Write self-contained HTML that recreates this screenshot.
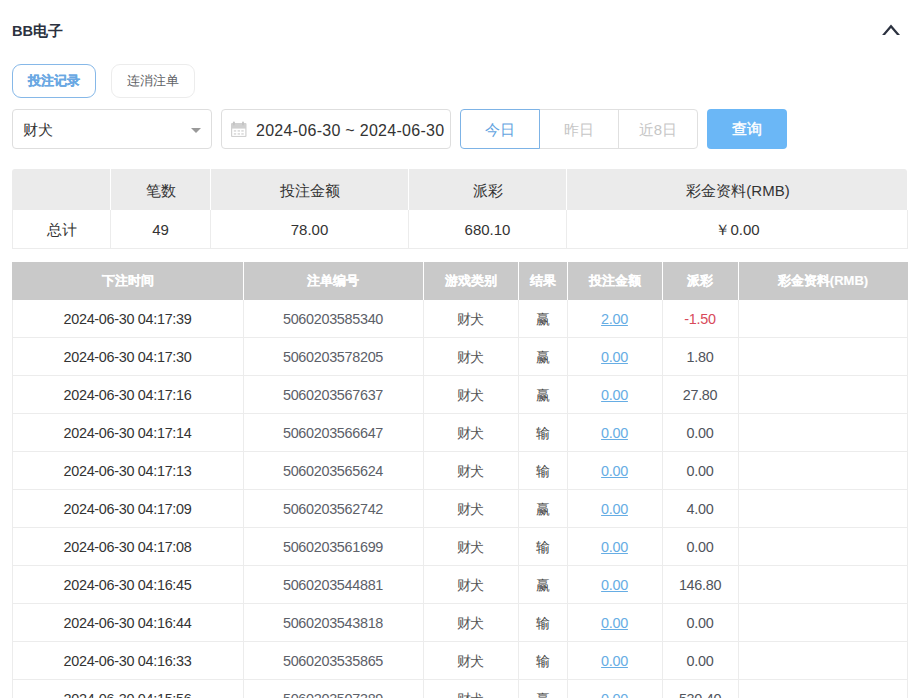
<!DOCTYPE html>
<html><head><meta charset="utf-8">
<style>
*{box-sizing:border-box;margin:0;padding:0}
html,body{width:914px;height:698px;overflow:hidden;background:#fff;font-family:"Liberation Sans",sans-serif;color:#333;position:relative}
.abs,.sh,.sd,.dh,.dr,.vw,.vg,.sc,.dc,.dhc{position:absolute}
#title{left:12px;top:22px;font-size:14.6px;font-weight:bold;color:#2c3240;line-height:18px}
#chev{left:881px;top:23px;width:20px;height:14px}
.tab{top:64px;height:34px;width:84px;border-radius:9px;border:1px solid #ececec;font-size:13px;line-height:32px;text-align:center;color:#606266}
#tab1{left:12px;border-color:#86b8e8;color:#6aa8e3;font-weight:bold;-webkit-text-stroke:0.25px #6aa8e3}
#tab2{left:111px}
.box{top:109px;height:40px;border:1px solid #dedede;border-radius:4px;font-size:15px;line-height:38px}
#sel{left:12px;width:200px;padding-left:10px;color:#333;line-height:40px}
#caret{left:191px;top:128px;width:0;height:0;border-left:5px solid transparent;border-right:5px solid transparent;border-top:5px solid #999}
#date{left:221px;width:230px;padding-left:34px;color:#333;letter-spacing:0.28px;font-size:16px;line-height:42px}
#cal{left:231px;top:121px;width:16px;height:16px}
#radio{left:460px;top:109px;width:238px;height:40px}
.rb{position:absolute;top:0;height:40px;border:1px solid #e0e0e0;font-size:15px;line-height:39px;text-align:center;color:#c6c6c6}
#rb1{left:0;width:80px;border-color:#7db3e6;color:#62a3e0;border-radius:4px 0 0 4px;z-index:2}
#rb2{left:79px;width:80px}
#rb3{left:158px;width:80px;border-radius:0 4px 4px 0}
#search{left:707px;top:109px;width:80px;height:40px;border-radius:4px;background:#6bb7f6;color:#fff;font-size:15px;line-height:40px;text-align:center;font-weight:normal;-webkit-text-stroke:0.45px #fff}
.sh{background:#ebebeb;border-radius:3px 3px 0 0}
.vw{width:1px;background:#fff}
.vg{width:1px;background:#ececec}
.sd{border:1px solid #ececec;border-top:none}
.sc{text-align:center;font-size:15px;line-height:40px;color:#333;padding-top:2px}
.sc.d{padding-top:1px;padding-left:1px}
.sc.h{padding-left:2px}
.dh{background:#c9c9c9}
.dhc{text-align:center;font-size:13px;line-height:40px;color:#fff;font-weight:bold;-webkit-text-stroke:0.15px #fff}
.dr{border-left:1px solid #ececec;border-right:1px solid #ececec;border-bottom:1px solid #ececec}
.dc{text-align:center;font-size:14.4px;line-height:39px;color:#444;letter-spacing:-0.3px}
.lk{color:#66ade4;text-decoration:underline}
.red{color:#d84a5a}
.c0{color:#333}.c1{color:#5c6068}.c2{color:#555}.c3{color:#444}.c5{color:#50545c}
</style></head><body>
<div id="title" class="abs">BB电子</div>
<svg id="chev" class="abs" viewBox="0 0 20 14"><path d="M10 1.6 L19 12 L16 12 L10 5.1 L4 12 L1.1 12 Z" fill="#2c3240"/></svg>
<div id="tab1" class="abs tab">投注记录</div>
<div id="tab2" class="abs tab">连消注单</div>
<div id="sel" class="abs box">财犬</div>
<div id="caret" class="abs"></div>
<div id="date" class="abs box">2024-06-30 ~ 2024-06-30</div>
<svg id="cal" class="abs" viewBox="0 0 16 16"><rect x="0" y="2" width="15.5" height="14" rx="1" fill="#d0d0d0"/><rect x="1.2" y="7.6" width="13.1" height="7.3" fill="#fff"/><g fill="#dedede"><rect x="2.8" y="9" width="2.4" height="1.8"/><rect x="6.6" y="9" width="2.4" height="1.8"/><rect x="10.3" y="9" width="2.4" height="1.8"/><rect x="2.8" y="12" width="2.4" height="1.8"/><rect x="6.6" y="12" width="2.4" height="1.8"/><rect x="10.3" y="12" width="2.4" height="1.8"/></g><rect x="1.9" y="0.5" width="2" height="4" rx="1" fill="#c4c4c4"/><rect x="11" y="0.5" width="2" height="4" rx="1" fill="#c4c4c4"/></svg>
<div id="radio" class="abs">
<div id="rb1" class="rb">今日</div>
<div id="rb2" class="rb">昨日</div>
<div id="rb3" class="rb">近8日</div>
</div>
<div id="search" class="abs">查询</div>
<div class="sh" style="left:12px;top:169px;width:895px;height:41px"></div>
<div class="vw" style="left:110px;top:169px;height:41px"></div>
<div class="vw" style="left:210px;top:169px;height:41px"></div>
<div class="vw" style="left:408px;top:169px;height:41px"></div>
<div class="vw" style="left:566px;top:169px;height:41px"></div>
<div class="sc h" style="left:12px;top:169px;width:98px;height:40px"></div>
<div class="sc h" style="left:110px;top:169px;width:100px;height:40px">笔数</div>
<div class="sc h" style="left:210px;top:169px;width:198px;height:40px">投注金额</div>
<div class="sc h" style="left:408px;top:169px;width:158px;height:40px">派彩</div>
<div class="sc h" style="left:566px;top:169px;width:342px;height:40px">彩金资料(RMB)</div>
<div class="sd" style="left:12px;top:210px;width:896px;height:39px"></div>
<div class="vg" style="left:110px;top:210px;height:39px"></div>
<div class="vg" style="left:210px;top:210px;height:39px"></div>
<div class="vg" style="left:408px;top:210px;height:39px"></div>
<div class="vg" style="left:566px;top:210px;height:39px"></div>
<div class="sc d" style="left:12px;top:209px;width:98px;height:40px">总计</div>
<div class="sc d" style="left:110px;top:209px;width:100px;height:40px">49</div>
<div class="sc d" style="left:210px;top:209px;width:198px;height:40px">78.00</div>
<div class="sc d" style="left:408px;top:209px;width:158px;height:40px">680.10</div>
<div class="sc d" style="left:566px;top:209px;width:342px;height:40px">￥0.00</div>
<div class="dh" style="left:12px;top:262px;width:896px;height:38px"></div>
<div class="vw" style="left:243px;top:262px;height:38px"></div>
<div class="vw" style="left:423px;top:262px;height:38px"></div>
<div class="vw" style="left:518px;top:262px;height:38px"></div>
<div class="vw" style="left:567px;top:262px;height:38px"></div>
<div class="vw" style="left:662px;top:262px;height:38px"></div>
<div class="vw" style="left:738px;top:262px;height:38px"></div>
<div class="dhc" style="left:12px;top:261px;width:231px;height:38px">下注时间</div>
<div class="dhc" style="left:243px;top:261px;width:180px;height:38px">注单编号</div>
<div class="dhc" style="left:423px;top:261px;width:95px;height:38px">游戏类别</div>
<div class="dhc" style="left:518px;top:261px;width:49px;height:38px">结果</div>
<div class="dhc" style="left:567px;top:261px;width:95px;height:38px">投注金额</div>
<div class="dhc" style="left:662px;top:261px;width:76px;height:38px">派彩</div>
<div class="dhc" style="left:738px;top:261px;width:170px;height:38px">彩金资料(RMB)</div>
<div class="dr" style="left:12px;top:300px;width:896px;height:38px"></div>
<div class="dc c0" style="left:12px;top:300px;width:231px;height:38px">2024-06-30 04:17:39</div>
<div class="dc c1" style="left:243px;top:300px;width:180px;height:38px">5060203585340</div>
<div class="dc c2" style="left:423px;top:300px;width:95px;height:38px">财犬</div>
<div class="dc c3" style="left:518px;top:300px;width:49px;height:38px">赢</div>
<div class="dc c4" style="left:567px;top:300px;width:95px;height:38px"><span class="lk">2.00</span></div>
<div class="dc c5" style="left:662px;top:300px;width:76px;height:38px"><span class="red">-1.50</span></div>
<div class="dc c6" style="left:738px;top:300px;width:170px;height:38px"></div>
<div class="dr" style="left:12px;top:338px;width:896px;height:38px"></div>
<div class="dc c0" style="left:12px;top:338px;width:231px;height:38px">2024-06-30 04:17:30</div>
<div class="dc c1" style="left:243px;top:338px;width:180px;height:38px">5060203578205</div>
<div class="dc c2" style="left:423px;top:338px;width:95px;height:38px">财犬</div>
<div class="dc c3" style="left:518px;top:338px;width:49px;height:38px">赢</div>
<div class="dc c4" style="left:567px;top:338px;width:95px;height:38px"><span class="lk">0.00</span></div>
<div class="dc c5" style="left:662px;top:338px;width:76px;height:38px"><span class="">1.80</span></div>
<div class="dc c6" style="left:738px;top:338px;width:170px;height:38px"></div>
<div class="dr" style="left:12px;top:376px;width:896px;height:38px"></div>
<div class="dc c0" style="left:12px;top:376px;width:231px;height:38px">2024-06-30 04:17:16</div>
<div class="dc c1" style="left:243px;top:376px;width:180px;height:38px">5060203567637</div>
<div class="dc c2" style="left:423px;top:376px;width:95px;height:38px">财犬</div>
<div class="dc c3" style="left:518px;top:376px;width:49px;height:38px">赢</div>
<div class="dc c4" style="left:567px;top:376px;width:95px;height:38px"><span class="lk">0.00</span></div>
<div class="dc c5" style="left:662px;top:376px;width:76px;height:38px"><span class="">27.80</span></div>
<div class="dc c6" style="left:738px;top:376px;width:170px;height:38px"></div>
<div class="dr" style="left:12px;top:414px;width:896px;height:38px"></div>
<div class="dc c0" style="left:12px;top:414px;width:231px;height:38px">2024-06-30 04:17:14</div>
<div class="dc c1" style="left:243px;top:414px;width:180px;height:38px">5060203566647</div>
<div class="dc c2" style="left:423px;top:414px;width:95px;height:38px">财犬</div>
<div class="dc c3" style="left:518px;top:414px;width:49px;height:38px">输</div>
<div class="dc c4" style="left:567px;top:414px;width:95px;height:38px"><span class="lk">0.00</span></div>
<div class="dc c5" style="left:662px;top:414px;width:76px;height:38px"><span class="">0.00</span></div>
<div class="dc c6" style="left:738px;top:414px;width:170px;height:38px"></div>
<div class="dr" style="left:12px;top:452px;width:896px;height:38px"></div>
<div class="dc c0" style="left:12px;top:452px;width:231px;height:38px">2024-06-30 04:17:13</div>
<div class="dc c1" style="left:243px;top:452px;width:180px;height:38px">5060203565624</div>
<div class="dc c2" style="left:423px;top:452px;width:95px;height:38px">财犬</div>
<div class="dc c3" style="left:518px;top:452px;width:49px;height:38px">输</div>
<div class="dc c4" style="left:567px;top:452px;width:95px;height:38px"><span class="lk">0.00</span></div>
<div class="dc c5" style="left:662px;top:452px;width:76px;height:38px"><span class="">0.00</span></div>
<div class="dc c6" style="left:738px;top:452px;width:170px;height:38px"></div>
<div class="dr" style="left:12px;top:490px;width:896px;height:38px"></div>
<div class="dc c0" style="left:12px;top:490px;width:231px;height:38px">2024-06-30 04:17:09</div>
<div class="dc c1" style="left:243px;top:490px;width:180px;height:38px">5060203562742</div>
<div class="dc c2" style="left:423px;top:490px;width:95px;height:38px">财犬</div>
<div class="dc c3" style="left:518px;top:490px;width:49px;height:38px">赢</div>
<div class="dc c4" style="left:567px;top:490px;width:95px;height:38px"><span class="lk">0.00</span></div>
<div class="dc c5" style="left:662px;top:490px;width:76px;height:38px"><span class="">4.00</span></div>
<div class="dc c6" style="left:738px;top:490px;width:170px;height:38px"></div>
<div class="dr" style="left:12px;top:528px;width:896px;height:38px"></div>
<div class="dc c0" style="left:12px;top:528px;width:231px;height:38px">2024-06-30 04:17:08</div>
<div class="dc c1" style="left:243px;top:528px;width:180px;height:38px">5060203561699</div>
<div class="dc c2" style="left:423px;top:528px;width:95px;height:38px">财犬</div>
<div class="dc c3" style="left:518px;top:528px;width:49px;height:38px">输</div>
<div class="dc c4" style="left:567px;top:528px;width:95px;height:38px"><span class="lk">0.00</span></div>
<div class="dc c5" style="left:662px;top:528px;width:76px;height:38px"><span class="">0.00</span></div>
<div class="dc c6" style="left:738px;top:528px;width:170px;height:38px"></div>
<div class="dr" style="left:12px;top:566px;width:896px;height:38px"></div>
<div class="dc c0" style="left:12px;top:566px;width:231px;height:38px">2024-06-30 04:16:45</div>
<div class="dc c1" style="left:243px;top:566px;width:180px;height:38px">5060203544881</div>
<div class="dc c2" style="left:423px;top:566px;width:95px;height:38px">财犬</div>
<div class="dc c3" style="left:518px;top:566px;width:49px;height:38px">赢</div>
<div class="dc c4" style="left:567px;top:566px;width:95px;height:38px"><span class="lk">0.00</span></div>
<div class="dc c5" style="left:662px;top:566px;width:76px;height:38px"><span class="">146.80</span></div>
<div class="dc c6" style="left:738px;top:566px;width:170px;height:38px"></div>
<div class="dr" style="left:12px;top:604px;width:896px;height:38px"></div>
<div class="dc c0" style="left:12px;top:604px;width:231px;height:38px">2024-06-30 04:16:44</div>
<div class="dc c1" style="left:243px;top:604px;width:180px;height:38px">5060203543818</div>
<div class="dc c2" style="left:423px;top:604px;width:95px;height:38px">财犬</div>
<div class="dc c3" style="left:518px;top:604px;width:49px;height:38px">输</div>
<div class="dc c4" style="left:567px;top:604px;width:95px;height:38px"><span class="lk">0.00</span></div>
<div class="dc c5" style="left:662px;top:604px;width:76px;height:38px"><span class="">0.00</span></div>
<div class="dc c6" style="left:738px;top:604px;width:170px;height:38px"></div>
<div class="dr" style="left:12px;top:642px;width:896px;height:38px"></div>
<div class="dc c0" style="left:12px;top:642px;width:231px;height:38px">2024-06-30 04:16:33</div>
<div class="dc c1" style="left:243px;top:642px;width:180px;height:38px">5060203535865</div>
<div class="dc c2" style="left:423px;top:642px;width:95px;height:38px">财犬</div>
<div class="dc c3" style="left:518px;top:642px;width:49px;height:38px">输</div>
<div class="dc c4" style="left:567px;top:642px;width:95px;height:38px"><span class="lk">0.00</span></div>
<div class="dc c5" style="left:662px;top:642px;width:76px;height:38px"><span class="">0.00</span></div>
<div class="dc c6" style="left:738px;top:642px;width:170px;height:38px"></div>
<div class="dr" style="left:12px;top:680px;width:896px;height:38px"></div>
<div class="dc c0" style="left:12px;top:680px;width:231px;height:38px">2024-06-30 04:15:56</div>
<div class="dc c1" style="left:243px;top:680px;width:180px;height:38px">5060203507389</div>
<div class="dc c2" style="left:423px;top:680px;width:95px;height:38px">财犬</div>
<div class="dc c3" style="left:518px;top:680px;width:49px;height:38px">赢</div>
<div class="dc c4" style="left:567px;top:680px;width:95px;height:38px"><span class="lk">0.00</span></div>
<div class="dc c5" style="left:662px;top:680px;width:76px;height:38px"><span class="">530.40</span></div>
<div class="dc c6" style="left:738px;top:680px;width:170px;height:38px"></div>
<div class="vg" style="left:243px;top:300px;height:398px"></div>
<div class="vg" style="left:423px;top:300px;height:398px"></div>
<div class="vg" style="left:518px;top:300px;height:398px"></div>
<div class="vg" style="left:567px;top:300px;height:398px"></div>
<div class="vg" style="left:662px;top:300px;height:398px"></div>
<div class="vg" style="left:738px;top:300px;height:398px"></div>
</body></html>
